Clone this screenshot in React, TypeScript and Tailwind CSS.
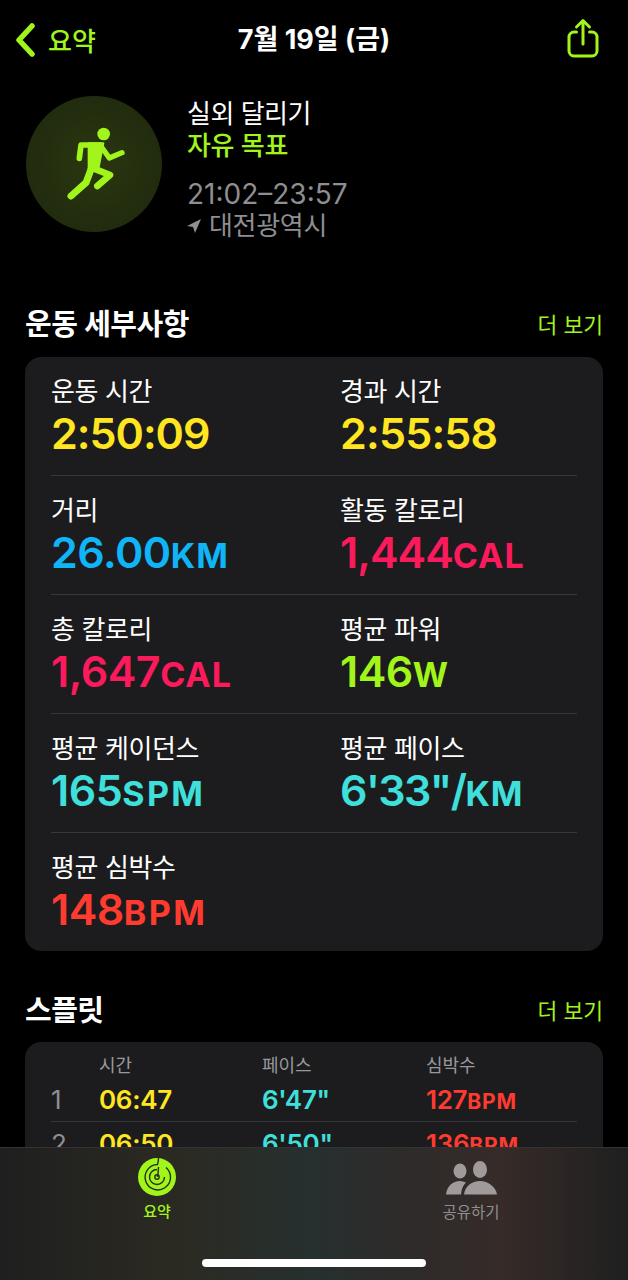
import React from "react";

const KR = { fontFamily: 'Inter, "Noto Sans CJK KR", sans-serif' };

function Metric({ label, value, unit, color, track, wide }: { label: string; value: string; unit?: string; color: string; track?: string; wide?: boolean }) {
  return (
    <div className="w-[289px] shrink-0">
      <div className="text-[26px] leading-[30px] text-white tracking-[-0.4px]">{label}</div>
      <div className={`mt-[1px] text-[43px] leading-[50px] font-semibold ${track ?? "tracking-[-0.5px]"} ${color}`}>
        {value}
        {unit && <span className={`text-[34px] font-bold ${wide ? "tracking-[2.4px]" : "tracking-[1px]"}`}>{unit}</span>}
      </div>
    </div>
  );
}

function Row({ children, last }: { children: React.ReactNode; last?: boolean }) {
  return (
    <div className={`flex pt-[20px] ${last ? "h-[118px]" : "h-[119px] border-b border-[#38383a]"}`}>
      {children}
    </div>
  );
}

function SplitRow({ n, t, p, b }: { n: string; t: string; p: string; b: string }) {
  return (
    <div className="flex h-[43px] items-center font-semibold text-[26px] tracking-[-0.3px]">
      <div className="w-[48px] text-[#8e8e93] font-normal">{n}</div>
      <div className="w-[163px] text-[#ffe620]">{t}</div>
      <div className="w-[164px] text-[#3fe0dc]">{p}</div>
      <div className="text-[#ff3b30]">
        {b}
        <span className="text-[21px] font-bold tracking-[0.8px]">BPM</span>
      </div>
    </div>
  );
}

export default function App() {
  return (
    <div className="relative h-[1280px] w-[628px] overflow-hidden bg-black" style={KR}>
      <header className="flex h-[80px] items-center justify-between pl-[14px] pr-[29px]">
        <div className="flex items-center gap-[12px] text-[#a2f51b]">
          <svg width="22" height="34" viewBox="0 0 22 34" fill="none">
            <path d="M18 3 L5 17 L18 31" stroke="#a2f51b" strokeWidth="5.5" strokeLinecap="round" strokeLinejoin="round" />
          </svg>
          <span className="pt-[2px] text-[26px] font-medium">요약</span>
        </div>
        <div className="absolute left-0 right-0 text-center text-[27px] font-bold text-white">7월 19일 (금)</div>
        <svg className="mt-[-4px]" width="32" height="40" viewBox="0 0 32 40" fill="none" stroke="#a2f51b" strokeWidth="3" strokeLinecap="round" strokeLinejoin="round">
          <path d="M9.5 14 H7 a5 5 0 0 0 -5 5 V33 a5 5 0 0 0 5 5 H25 a5 5 0 0 0 5 -5 V19 a5 5 0 0 0 -5 -5 H22.5" />
          <path d="M16 26 V3 M9.5 9 L16 2.5 L22.5 9" />
        </svg>
      </header>

      <section className="flex pl-[26px] pt-[16px]">
        <div className="h-[136px] w-[136px] rounded-full bg-[radial-gradient(circle,#2b3711_0%,#1d260d_100%)]">
          <svg width="136" height="136" viewBox="18 18 408 408" fill="none" stroke="#a2f51b" strokeLinecap="round" strokeLinejoin="round">
            <circle cx="251" cy="132" r="19" fill="#a2f51b" stroke="none" />
            <path d="M178 205 L183 165 H238" strokeWidth="17" />
            <path d="M240 165 L268 204 L306 188" strokeWidth="16" />
            <path d="M206 160 H250 L234 242 L206 240 Z" fill="#a2f51b" strokeWidth="6" />
            <path d="M222 236 L270 255 L232 288" strokeWidth="20" />
            <path d="M218 225 L198 278 L153 318" strokeWidth="21" />
          </svg>
        </div>
        <div className="ml-[25px] pt-[2px]">
          <div className="text-[26px] leading-[32px] text-white tracking-[-0.5px]">실외 달리기</div>
          <div className="text-[26px] leading-[32px] font-medium text-[#a2f51b] tracking-[-0.3px]">자유 목표</div>
          <div className="mt-[16px] text-[28px] leading-[32px] text-[#8e8e93]">21:02–23:57</div>
          <div className="flex items-center gap-[8px] text-[26px] leading-[32px] text-[#8e8e93]">
            <svg width="14" height="14" viewBox="0 0 14 14" fill="#8e8e93"><path d="M14 0 L0 7 L6 8 L8 14 Z" /></svg>
            <span className="tracking-[-0.3px]">대전광역시</span>
          </div>
        </div>
      </section>

      <section className="mt-[65px] px-[25px]">
        <div className="flex items-center justify-between pb-[14px]">
          <h2 className="text-[29px] leading-[36px] font-semibold text-white tracking-[-0.5px]">운동 세부사항</h2>
          <span className="text-[21.5px] text-[#a2f51b]">더 보기</span>
        </div>
        <div className="rounded-[16px] bg-[#1c1c1e] px-[26px]">
          <Row>
            <Metric track="tracking-[-1px]" label="운동 시간" value="2:50:09" color="text-[#ffe620]" />
            <Metric track="tracking-[-0.8px]" label="경과 시간" value="2:55:58" color="text-[#ffe620]" />
          </Row>
          <Row>
            <Metric label="거리" value="26.00" unit="KM" color="text-[#0fb5f7]" />
            <Metric track="tracking-[-1px]" label="활동 칼로리" value="1,444" unit="CAL" color="text-[#fb1a5b]" />
          </Row>
          <Row>
            <Metric label="총 칼로리" value="1,647" unit="CAL" color="text-[#fb1a5b]" />
            <Metric label="평균 파워" value="146" unit="W" color="text-[#a2f51b]" />
          </Row>
          <Row>
            <Metric wide label="평균 케이던스" value="165" unit="SPM" color="text-[#3fe0dc]" />
            <Metric track="tracking-[-1.6px]" label="평균 페이스" value={'6\'33"/'} unit="KM" color="text-[#3fe0dc]" />
          </Row>
          <Row last>
            <Metric wide label="평균 심박수" value="148" unit="BPM" color="text-[#ff3b30]" />
          </Row>
        </div>
      </section>

      <section className="mt-[42px] px-[25px]">
        <div className="flex items-center justify-between pb-[13px]">
          <h2 className="text-[29px] leading-[36px] font-semibold text-white tracking-[-0.5px]">스플릿</h2>
          <span className="text-[21.5px] text-[#a2f51b]">더 보기</span>
        </div>
        <div className="h-[200px] rounded-[16px] bg-[#1c1c1e] px-[26px] pt-[11px]">
          <div className="flex text-[18px] leading-[25px] text-[#98989d]">
            <div className="w-[48px]" />
            <div className="w-[163px]">시간</div>
            <div className="w-[164px]">페이스</div>
            <div>심박수</div>
          </div>
          <div className="border-b border-[#38383a]">
            <SplitRow n="1" t="06:47" p={'6\'47"'} b="127" />
          </div>
          <SplitRow n="2" t="06:50" p={'6\'50"'} b="136" />
        </div>
      </section>

      <nav
        className="absolute bottom-0 left-0 right-0 h-[133px] border-t border-[#333335]"
        style={{ background: "linear-gradient(90deg,#1f1f1f 0%,#2b2a22 28%,#26302f 50%,#2e2b2a 65%,#362b28 80%,#1f1f1f 100%)" }}
      >
        <div className="flex">
          <div className="flex w-[314px] flex-col items-center pt-[10px]">
            <svg width="38" height="38" viewBox="0 0 38 38" fill="none" stroke="#26301a" strokeWidth="1.4">
              <circle cx="19" cy="19" r="19" fill="#a2f51b" stroke="none" />
              <path d="M20.5 0 C20.5 3 20 5 19.5 6.5 A12.7 12.7 0 1 0 28 9.5" />
              <path d="M19 11.5 A7.5 7.5 0 1 0 26.5 19" />
              <circle cx="19" cy="19" r="2.2" />
              <path d="M19.5 19 C20 16 20.5 13 20.5 9" />
            </svg>
            <span className="mt-[6px] text-[15px] leading-[20px] font-medium text-[#a2f51b]">요약</span>
          </div>
          <div className="flex w-[314px] flex-col items-center pt-[13px]">
            <svg width="52" height="34" viewBox="10 10 52 34" fill="#a19a9b">
              <ellipse cx="25" cy="20" rx="6.5" ry="7.5" />
              <ellipse cx="45" cy="18.5" rx="7" ry="8.5" />
              <path d="M29 43.5 C30 35 37 30 45 30 C53 30 61 36 62 43.5 Z" />
              <path d="M11 43.5 C12 35 18 30 25 30 C27 30 29 30.5 31 31.5 C28 34 26.5 38 26 43.5 Z" />
            </svg>
            <span className="mt-[8px] text-[15.5px] leading-[20px] text-[#8e8e93]">공유하기</span>
          </div>
        </div>
        <div className="absolute bottom-[13px] left-[202px] h-[8px] w-[224px] rounded-full bg-white" />
      </nav>
    </div>
  );
}
